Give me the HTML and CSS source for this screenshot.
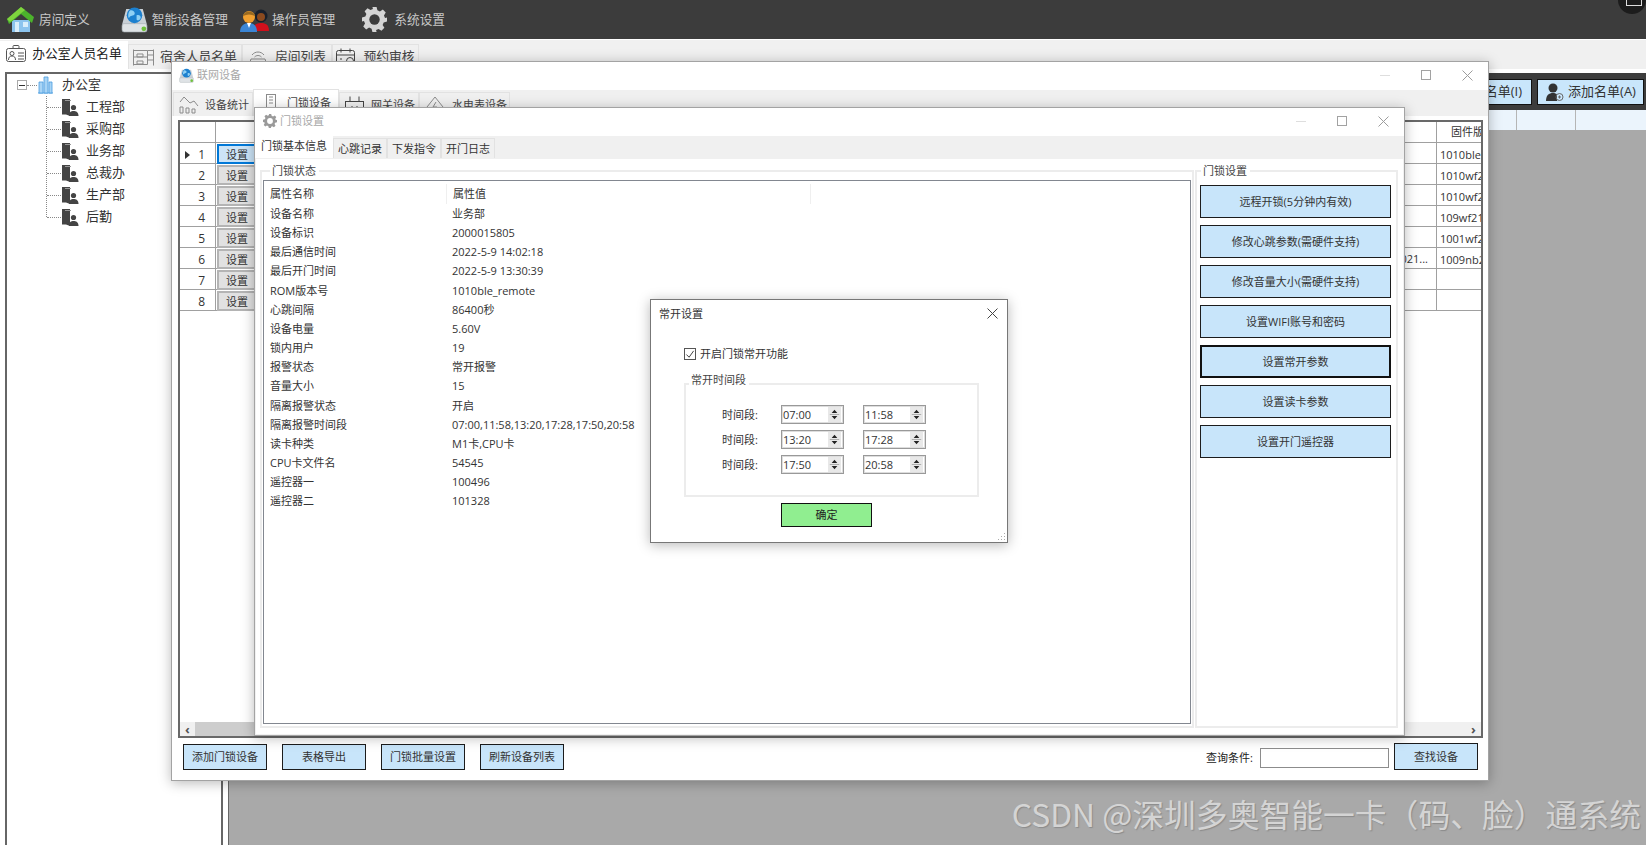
FILE: index.html
```html
<!DOCTYPE html>
<html lang="zh">
<head>
<meta charset="utf-8">
<title>联网设备</title>
<link rel="stylesheet" href="styles.css">
</head>
<body>
<svg class="defs" width="0" height="0">
  <symbol id="dept" viewBox="0 0 18 18">
    <path d="M1 1h8v17l-4-1.500H1z" fill="#444"/>
    <path d="M4 2h6v1H4z" fill="#999"/>
    <circle cx="12.500" cy="9.500" r="2.600" fill="#444"/>
    <path d="M8 18c0-4 2-5 4.500-5s5 1 5 5z" fill="#444"/>
  </symbol>
  <symbol id="disc" viewBox="0 0 26 26">
    <path d="M5 3h16l4 15H1z" fill="#c9d0d6"/>
    <rect x="1" y="17" width="24" height="8" rx="2" fill="#dfe3e6" stroke="#a5acb1" stroke-width=".6"/>
    <circle cx="13" cy="9" r="7.500" fill="#1c80cf"/>
    <path d="M9 4c3 0 5 2 4 4s-4 1-5 3-2-5 1-7zM15 9c2-1 4 0 4 2s-3 4-4 2z" fill="#8fd0f4"/>
    <circle cx="22" cy="22" r="2.300" fill="#6fc13e"/>
  </symbol>
  <symbol id="gear" viewBox="0 0 24 24">
    <path d="M10 0h4l.8 3.200 2.400 1 2.800-1.700 2.800 2.800-1.700 2.800 1 2.400L24 10v4l-3.200.8-1 2.400 1.700 2.800-2.800 2.800-2.800-1.700-2.400 1L14 24h-4l-.8-3.200-2.400-1-2.800 1.700-2.800-2.800 1.700-2.800-1-2.400L0 14v-4l3.200-.8 1-2.400-1.700-2.800 2.800-2.800 2.800 1.700 2.400-1z" fill="currentColor"/>
    <circle cx="12" cy="12" r="5" fill="var(--hole)"/>
  </symbol>
  <symbol id="win-x" viewBox="0 0 11 11"><path d="M.5.500l10 10M10.500.500l-10 10" stroke="currentColor" fill="none"/></symbol>
  <symbol id="arrows" viewBox="0 0 12 16"><path d="M6 3l3 3.500H3zM6 13l3-3.500H3z" fill="#222"/><path d="M1 8h10" stroke="#aaa"/></symbol>
</svg>

<header class="topbar">
  <div class="menu m-house">
    <svg class="ico" width="28" height="28" viewBox="0 0 28 28"><path d="M5 14h18v12H5z" fill="#8cc4ee"/><path d="M8 16h4v10H8zM16 16h5v5h-5z" fill="#d9eefb"/><path d="M0 13L14 1l13 10-2 6L14 8 2 18z" fill="#4cb32c"/><path d="M0 13L14 1l4 3L3 16z" fill="#7fd43e"/></svg>
    <span>房间定义</span>
  </div>
  <div class="menu m-disc">
    <svg class="ico" width="27" height="27"><use href="#disc"/></svg>
    <span>智能设备管理</span>
  </div>
  <div class="menu m-ops">
    <svg class="ico" width="30" height="24" viewBox="0 0 30 24"><circle cx="21" cy="8" r="6.500" fill="#18202c"/><circle cx="21" cy="9" r="4" fill="#8a4a1f"/><path d="M13 23c0-6 3-8 8-8s8 2 8 8z" fill="#d0101c"/><circle cx="9" cy="9" r="6" fill="#f0a030"/><path d="M3 8c1-6 11-6 12 0-4-2-8-2-12 0z" fill="#9a6a20"/><path d="M0 24c0-6 4-9 9-9s8 3 8 9z" fill="#3b86d6"/><path d="M7 15h4l-2 5z" fill="#fff"/></svg>
    <span>操作员管理</span>
  </div>
  <div class="menu m-gear">
    <svg class="ico gear-light" width="25" height="25"><use href="#gear"/></svg>
    <span>系统设置</span>
  </div>
  <div class="corner"></div>
</header>

<nav class="tabstrip">
  <div class="mtab is-active">
    <svg width="20" height="18" viewBox="0 0 20 18" class="line-ico"><rect x=".5" y="3.500" width="19" height="13" rx="2"/><rect x="7" y=".5" width="6" height="3" rx="1"/><circle cx="6" cy="8.500" r="2"/><path d="M2.500 15c0-3 1.500-4 3.500-4s3.500 1 3.500 4M12 8h6M12 11h6M12 14h6"/></svg>
    <span>办公室人员名单</span>
  </div>
  <div class="mtab">
    <svg width="21" height="17" viewBox="0 0 21 17" class="line-ico grey"><path d="M.5.500v16M20.500.500v16M.5 1.500h14v14H.5M14.500 1.500h6M14.500 6h6M14.500 11h6M.5 8h14M4 5h6v3H4zM4 12h6v3H4z"/></svg>
    <span>宿舍人员名单</span>
  </div>
  <div class="mtab">
    <svg width="20" height="17" viewBox="0 0 20 17" class="line-ico grey"><path d="M4 6c3-4 9-4 12 0M6.500 8c2-2 5-2 7 0M1 16l2-6h14l2 6z"/><path d="M4 13h1M7 13h1M10 13h1"/></svg>
    <span>房间列表</span>
  </div>
  <div class="mtab">
    <svg width="20" height="18" viewBox="0 0 20 18" class="line-ico dark"><rect x=".5" y="2.500" width="18" height="14" rx="2"/><path d="M5 .5v4M14 .5v4M.5 7h18M4 11h2M4 14h2"/><circle cx="14" cy="13" r="3.500" fill="#f0f0f0"/></svg>
    <span>预约审核</span>
  </div>
</nav>

<main class="workspace">
  <aside class="treewrap">
    <div class="tree">
      <div class="tree-root">
        <span class="minus"></span><span class="dots"></span>
        <svg width="17" height="18" viewBox="0 0 17 18" class="bld"><path d="M1 17h15" stroke="#4a9de0"/><path d="M2 6h4v11H2zM7 1h4v16H7zM12 6h3v11h-3z" fill="#a8d4f5" stroke="#4a9de0" stroke-width=".8"/></svg>
        <span class="tree-label">办公室</span>
      </div>
      <ul class="tree-kids">
        <li><svg width="18" height="18"><use href="#dept"/></svg><span>工程部</span></li>
        <li><svg width="18" height="18"><use href="#dept"/></svg><span>采购部</span></li>
        <li><svg width="18" height="18"><use href="#dept"/></svg><span>业务部</span></li>
        <li><svg width="18" height="18"><use href="#dept"/></svg><span>总裁办</span></li>
        <li><svg width="18" height="18"><use href="#dept"/></svg><span>生产部</span></li>
        <li><svg width="18" height="18"><use href="#dept"/></svg><span>后勤</span></li>
      </ul>
    </div>
  </aside>
  <section class="mdi">
    <div class="mdi-bar">
      <button class="dark-btn btn-imp">导入名单(I)</button>
      <button class="dark-btn btn-add">
        <svg width="20" height="20" viewBox="0 0 20 20"><circle cx="8" cy="6" r="4.500" fill="#333"/><path d="M1 19c0-6 3-8 7-8 2 0 3 .5 4 1.500V19z" fill="#333"/><circle cx="14.500" cy="15" r="3.500" fill="none" stroke="#666"/><path d="M13 15h3M14.500 13.500v3" stroke="#666"/></svg>
        <span>添加名单(A)</span>
      </button>
    </div>
    <div class="mdi-head"><i class="h1"></i><i class="h2"></i><i class="h3"></i></div>
  </section>
</main>

<!-- 联网设备 -->
<section class="win win-net">
  <div class="titlebar">
    <svg width="15" height="15" class="t-ico"><use href="#disc" width="15" height="15"/></svg>
    <span class="t-text">联网设备</span>
    <div class="winctl"><i class="w-min"></i><i class="w-max"></i><svg width="11" height="11"><use href="#win-x"/></svg></div>
  </div>
  <div class="net-tabs">
    <div class="ntab"><svg width="20" height="18" viewBox="0 0 20 18" class="line-ico grey"><path d="M1 11h3v6H1zM7 12h3v5H7zM13 13h3v4h-3zM1 6l4-5 6 6 4-2 4 5"/></svg><span>设备统计</span></div>
    <div class="ntab is-active"><svg width="18" height="18" viewBox="0 0 18 18" class="line-ico grey"><rect x="3.500" y=".5" width="9" height="16"/><path d="M6 3h4M6 6h4M6 9h4"/></svg><span>门锁设备</span></div>
    <div class="ntab"><svg width="20" height="18" viewBox="0 0 20 18" class="line-ico dark"><rect x=".5" y="5.500" width="18" height="11"/><path d="M5 .5v5M14 .5v5M6 11h2M11 11h2"/></svg><span>网关设备</span></div>
    <div class="ntab"><svg width="20" height="18" viewBox="0 0 20 18" class="line-ico grey"><path d="M10 1l8 10a8 7 0 0 1-16 0zM11 6l-3 5h4l-2 4"/></svg><span>水电表设备</span></div>
  </div>
  <div class="net-body">
    <div class="grid">
      <div class="g-rows">
        <div class="g-row g-head"><div class="g-rh"></div><div class="g-mid"></div><div class="g-fw fw-title">固件版</div></div>
        <div class="g-row"><div class="g-rh"><span class="cursor"></span>1</div><div class="g-mid"><span class="set set-on">设置</span></div><div class="g-fw">1010ble</div></div>
        <div class="g-row"><div class="g-rh">2</div><div class="g-mid"><span class="set">设置</span></div><div class="g-fw">1010wf2</div></div>
        <div class="g-row"><div class="g-rh">3</div><div class="g-mid"><span class="set">设置</span></div><div class="g-fw">1010wf2</div></div>
        <div class="g-row"><div class="g-rh">4</div><div class="g-mid"><span class="set">设置</span></div><div class="g-fw">109wf21</div></div>
        <div class="g-row"><div class="g-rh">5</div><div class="g-mid"><span class="set">设置</span></div><div class="g-fw">1001wf2</div></div>
        <div class="g-row"><div class="g-rh">6</div><div class="g-mid"><span class="set">设置</span><em class="g-trunc">2021...</em></div><div class="g-fw">1009nb2</div></div>
        <div class="g-row"><div class="g-rh">7</div><div class="g-mid"><span class="set">设置</span></div><div class="g-fw"></div></div>
        <div class="g-row"><div class="g-rh">8</div><div class="g-mid"><span class="set">设置</span></div><div class="g-fw"></div></div>
      </div>
      <div class="hscroll"><span class="arr">‹</span><div class="thumb"></div><span class="arr">›</span></div>
    </div>
  </div>
  <footer class="net-foot">
    <button class="blue-btn f-btn">添加门锁设备</button>
    <button class="blue-btn f-btn">表格导出</button>
    <button class="blue-btn f-btn">门锁批量设置</button>
    <button class="blue-btn f-btn">刷新设备列表</button>
    <span class="f-label">查询条件:</span>
    <span class="f-input"></span>
    <button class="blue-btn f-find">查找设备</button>
  </footer>
</section>

<!-- 门锁设置 -->
<section class="win win-lock">
  <div class="titlebar">
    <svg width="14" height="14" class="t-ico gear-grey"><use href="#gear" width="14" height="14"/></svg>
    <span class="t-text">门锁设置</span>
    <div class="winctl"><i class="w-min"></i><i class="w-max"></i><svg width="11" height="11"><use href="#win-x"/></svg></div>
  </div>
  <div class="lock-tabs">
    <div class="ltab is-active">门锁基本信息</div>
    <div class="ltab">心跳记录</div>
    <div class="ltab">下发指令</div>
    <div class="ltab">开门日志</div>
  </div>
  <div class="lock-panel">
    <div class="group g-status">
      <span class="legend">门锁状态</span>
      <div class="plist">
        <div class="p-head"><span>属性名称</span><span>属性值</span><span></span></div>
        <div class="p-row"><span>设备名称</span><span>业务部</span></div>
        <div class="p-row"><span>设备标识</span><span>2000015805</span></div>
        <div class="p-row"><span>最后通信时间</span><span>2022-5-9 14:02:18</span></div>
        <div class="p-row"><span>最后开门时间</span><span>2022-5-9 13:30:39</span></div>
        <div class="p-row"><span>ROM版本号</span><span>1010ble_remote</span></div>
        <div class="p-row"><span>心跳间隔</span><span>86400秒</span></div>
        <div class="p-row"><span>设备电量</span><span>5.60V</span></div>
        <div class="p-row"><span>锁内用户</span><span>19</span></div>
        <div class="p-row"><span>报警状态</span><span>常开报警</span></div>
        <div class="p-row"><span>音量大小</span><span>15</span></div>
        <div class="p-row"><span>隔离报警状态</span><span>开启</span></div>
        <div class="p-row"><span>隔离报警时间段</span><span>07:00,11:58,13:20,17:28,17:50,20:58</span></div>
        <div class="p-row"><span>读卡种类</span><span>M1卡,CPU卡</span></div>
        <div class="p-row"><span>CPU卡文件名</span><span>54545</span></div>
        <div class="p-row"><span>遥控器一</span><span>100496</span></div>
        <div class="p-row"><span>遥控器二</span><span>101328</span></div>
      </div>
    </div>
    <div class="group g-actions">
      <span class="legend">门锁设置</span>
      <button class="blue-btn a-btn">远程开锁(5分钟内有效)</button>
      <button class="blue-btn a-btn">修改心跳参数(需硬件支持)</button>
      <button class="blue-btn a-btn">修改音量大小(需硬件支持)</button>
      <button class="blue-btn a-btn">设置WIFI账号和密码</button>
      <button class="blue-btn a-btn a-focus">设置常开参数</button>
      <button class="blue-btn a-btn">设置读卡参数</button>
      <button class="blue-btn a-btn">设置开门遥控器</button>
    </div>
  </div>
</section>

<!-- 常开设置 -->
<section class="dialog">
  <div class="d-title"><span>常开设置</span><svg width="11" height="11"><use href="#win-x"/></svg></div>
  <label class="d-check">
    <span class="cb"><svg width="11" height="11" viewBox="0 0 11 11"><path d="M1.500 5.500l3 3 5-7" fill="none" stroke="#444" stroke-width="1.100"/></svg></span>
    <span>开启门锁常开功能</span>
  </label>
  <div class="d-group">
    <span class="legend d-legend">常开时间段</span>
    <div class="d-row"><span class="d-label">时间段:</span><span class="spin"><b>07:00</b><svg width="13" height="15"><use href="#arrows"/></svg></span><span class="spin"><b>11:58</b><svg width="13" height="15"><use href="#arrows"/></svg></span></div>
    <div class="d-row"><span class="d-label">时间段:</span><span class="spin"><b>13:20</b><svg width="13" height="15"><use href="#arrows"/></svg></span><span class="spin"><b>17:28</b><svg width="13" height="15"><use href="#arrows"/></svg></span></div>
    <div class="d-row"><span class="d-label">时间段:</span><span class="spin"><b>17:50</b><svg width="13" height="15"><use href="#arrows"/></svg></span><span class="spin"><b>20:58</b><svg width="13" height="15"><use href="#arrows"/></svg></span></div>
  </div>
  <button class="ok">确定</button>
  <svg class="grip" width="9" height="9" viewBox="0 0 9 9"><path d="M7 1h1v1H7zM4 4h1v1H4zM7 4h1v1H7zM1 7h1v1H1zM4 7h1v1H4zM7 7h1v1H7z" fill="#aaa"/></svg>
</section>

<div class="watermark">CSDN @深圳多奥智能一卡（码、脸）通系统</div>
</body>
</html>
```

FILE: styles.css
```css
* { box-sizing: border-box; }
html, body { margin: 0; height: 845px; overflow: hidden; }
body {
  width: 1646px;
  position: relative;
  background: #fff;
  color: #333;
  font: 11px/1.2 "Open Sans", "Noto Sans CJK SC", sans-serif;
  display: flex;
  flex-direction: column;
}
.defs { position: absolute; }
button { font: inherit; color: inherit; padding: 0; cursor: default; }
ul { list-style: none; margin: 0; padding: 0; }

/* top menu */
.topbar {
  height: 40px;
  flex: none;
  background: #3c3c3c;
  border-bottom: 1px solid #fff;
  display: flex;
  align-items: center;
  color: #c8c8c8;
  font-size: 12.700px;
  position: relative;
  overflow: hidden;
  --hole: #3c3c3c;
}
.menu { display: flex; align-items: center; gap: 4px; }
.m-house { margin-left: 7px; }
.m-disc { margin-left: 31px; }
.m-ops { margin-left: 12px; gap: 2px; }
.m-gear { margin-left: 27px; gap: 7px; }
.ico { flex: none; }
.gear-light { color: #d4d4d4; }
.corner {
  position: absolute;
  right: 0;
  top: -14px;
  width: 28px;
  height: 28px;
  border-radius: 50%;
  background: #1c1c1c;
}
.corner::after {
  content: "";
  position: absolute;
  left: 8px;
  top: 13px;
  width: 14px;
  height: 6px;
  border: 1px solid #ddd;
  border-top: 0;
}

/* tabs of the main window */
.tabstrip {
  height: 30px;
  flex: none;
  background: #f0f0f0;
  border-bottom: 1px solid #fff;
  display: flex;
  align-items: flex-end;
  font-size: 12.800px;
  white-space: nowrap;
}
.mtab {
  height: 25px;
  flex: none;
  display: flex;
  align-items: center;
  justify-content: center;
  gap: 7px;
  background: #f0f0f0;
  border: 1px solid #e2e2e2;
  border-bottom: 0;
  color: #444;
  width: 87px;
}
.mtab:nth-child(2) { width: 114px; gap: 6px; }
.mtab:nth-child(3) { width: 90px; }
.mtab.is-active { width: 128px; height: 28px; background: #fff; border: 0; color: #222; padding: 0 0 2px; gap: 6px; }
.line-ico { flex: none; fill: none; stroke: #555; stroke-width: 1; }
.line-ico.grey { stroke: #8b8b8b; }
.line-ico.dark { stroke: #444; }

/* workspace */
.workspace { flex: 1; display: flex; min-height: 0; background: #fff; }
.treewrap { width: 228px; flex: none; padding: 2px 5px 0 5px; }
.tree {
  height: 100%;
  background: #fff;
  border: 2px solid #666;
  border-width: 2px 2px 0 2px;
  padding: 0 0 0 10px;
  font-size: 13px;
  color: #333;
}
.tree-root { display: flex; align-items: center; height: 22px; }
.minus {
  width: 10px; height: 10px;
  border: 1px solid #a9a9a9;
  background: linear-gradient(#333, #333) center / 6px 1px no-repeat, #fff;
}
.dots { width: 10px; border-top: 1px dotted #888; }
.bld { flex: none; }
.tree-label { margin-left: 8px; }
.tree-kids { margin: 0 0 0 29px; border-left: 1px dotted #888; height: 121px; }
.tree-kids li { display: flex; align-items: center; height: 22px; padding-left: 14px; gap: 7px; position: relative; }
.tree-kids li::before { content: ""; position: absolute; left: 0; top: 11px; width: 14px; border-top: 1px dotted #888; }
.mdi { flex: 1; background: #a9a9a9; border-left: 1px solid #666; display: flex; flex-direction: column; margin-top: 3px; }
.mdi-bar {
  height: 37px;
  flex: none;
  background: #3c3c3c;
  display: flex;
  justify-content: flex-end;
  align-items: center;
  gap: 5px;
  padding: 1px 2px 0 0;
}
.dark-btn {
  height: 26px;
  width: 107px;
  background: #c9e6fb;
  border: 1px solid #111;
  font-size: 13px;
  color: #333;
  display: flex;
  align-items: center;
  justify-content: center;
  gap: 3px;
  white-space: nowrap;
}
.btn-imp { justify-content: flex-end; padding-right: 9px; }
.mdi-head { height: 20px; flex: none; background: #ebf4fc; display: flex; }
.mdi-head i { display: block; border-right: 1px solid #b5b5b5; }
.mdi-head .h1 { width: 1288px; }
.mdi-head .h2 { width: 59px; }
.mdi-head .h3 { flex: 1; border: 0; }

/* windows lie over the workspace, at their own desktop position */
.win, .dialog {
  position: absolute;
  background: #fff;
  display: flex;
  flex-direction: column;
  border: 1px solid #a3a3a3;
  box-shadow: 0 2px 12px rgba(0, 0, 0, .28);
}
.win-net { left: 171px; top: 61px; width: 1318px; height: 720px; }
.win-lock { left: 254px; top: 107px; width: 1151px; height: 629px; }
.titlebar { height: 28px; flex: none; display: flex; align-items: center; position: relative; padding: 0 0 2px 8px; gap: 3px; color: #a8a8a8; --hole: #fff; }
.win-net .titlebar { padding-left: 7px; }
.t-ico { flex: none; }
.gear-grey { color: #9a9a9a; }
.t-text { font-size: 11px; }
.winctl { margin-left: auto; display: flex; align-items: center; color: #9c9c9c; padding-right: 15px; }
.w-min { width: 10px; border-top: 1px solid #dedede; margin-right: 31px; }
.w-max { width: 10px; height: 10px; border: 1px solid #a2a2a2; margin-right: 31px; }
.net-tabs { height: 26px; flex: none; background: #f0f0f0; display: flex; align-items: flex-start; padding: 2px 0 0 1px; font-size: 11px; white-space: nowrap; }
.ntab { height: 24px; width: 80px; flex: none; display: flex; align-items: center; gap: 6px; padding: 0 0 0 5px; background: #f0f0f0; border: 1px solid #e2e2e2; border-bottom: 0; color: #444; }
.ntab:last-child { width: 91px; gap: 7px; }
.ntab.is-active { background: #fff; margin-top: -3px; height: 27px; padding-left: 9px; width: 86px; }
.net-body { flex: 1; padding: 4px 5px 0 6px; min-height: 0; background: #fff; display: flex; }
.grid { flex: 1; border: 2px solid #696969; display: flex; flex-direction: column; min-height: 0; overflow: hidden; }
.g-rows { flex: 1; }
.g-row { display: flex; height: 21px; border-bottom: 1px solid #a0a0a0; }
.g-rh { width: 36px; flex: none; border-right: 1px solid #a0a0a0; position: relative; text-align: right; padding-right: 10px; line-height: 24px; font-size: 12px; }
.cursor { position: absolute; left: 5px; top: 8px; border: 4px solid transparent; border-left: 5px solid #333; border-right: 0; }
.g-mid { flex: 1; display: flex; align-items: center; border-right: 1px solid #a0a0a0; padding-left: 1px; }
.g-fw { width: 44px; flex: none; overflow: hidden; white-space: nowrap; padding-left: 3px; line-height: 23px; font-size: 11px; }
.g-head .g-fw { line-height: 20px; }
.fw-title { padding-left: 14px; }
.set { width: 40px; height: 20px; margin-top: 1px; background: #e1e1e1; border: 2px solid #b4b4b4; text-align: center; line-height: 17px; }
.set-on { background: #cce4f7; border-color: #0078d7; }
.g-trunc { margin-left: auto; font-style: normal; padding-right: 8px; margin-top: 2px; }
.hscroll { height: 14px; flex: none; background: #f0f0f0; display: flex; align-items: center; font-size: 13px; font-weight: 700; color: #555; line-height: 13px; }
.arr { width: 15px; text-align: center; flex: none; }
.thumb { width: 400px; height: 100%; background: #cdcdcd; margin-right: auto; }
.net-foot { height: 42px; flex: none; display: flex; align-items: flex-start; padding: 0 10px 0 11px; background: #fff; }
.blue-btn { background: #c8e5fa; border: 1px solid #1c1c1c; color: #333; font-size: 11px; }
.f-btn { width: 84px; height: 26px; margin: 6px 15px 0 0; }
.f-label { margin: 13px 7px 0 auto; color: #222; }
.f-input { width: 129px; height: 20px; border: 1px solid #8c8c8c; margin: 10px 5px 0 0; }
.f-find { width: 84px; height: 27px; margin-top: 5px; }

/* lock settings */
.lock-tabs { height: 22px; flex: none; background: #f0f0f0; display: flex; align-items: flex-end; }
.ltab { height: 20px; width: 54px; background: #f0f0f0; border: 1px solid #e2e2e2; border-bottom: 0; line-height: 20px; text-align: center; color: #333; }
.ltab.is-active { width: 78px; height: 22px; background: #fff; border: 0; line-height: 20px; }
.lock-panel { flex: 1; display: flex; gap: 1px; padding: 11px 5px 6px 4px; background: #fff; border: 1px solid #f0f0f0; min-height: 0; }
.group { border: 2px solid #ececec; position: relative; }
.legend { position: absolute; top: -8px; left: 8px; background: #fff; padding: 0 3px 0 2px; line-height: 14px; color: #444; }
.g-status { flex: 1; padding: 8px 1px 2px; display: flex; }
.g-actions { width: 203px; flex: none; padding: 13px 5px 0 3px; display: flex; flex-direction: column; gap: 7px; }
.g-actions .legend { left: 4px; }
.plist { flex: 1; border: 1px solid #828790; padding: 3px 0 0 0; }
.p-head, .p-row { display: flex; align-items: center; white-space: nowrap; }
.p-head { height: 20px; }
.p-row { height: 19.170px; }
.p-head span, .p-row span { width: 183px; padding-left: 6px; flex: none; }
.p-head span { border-right: 1px solid #efefef; height: 20px; line-height: 20px; }
.p-head span:nth-child(2) { width: 364px; }
.p-head span:nth-child(3) { border: 0; }
.p-row span:nth-child(2) { width: auto; padding-left: 5px; }
.a-btn { height: 33px; flex: none; }
.a-focus { border: 2px solid #111; }

/* dialog */
.dialog { left: 650px; top: 299px; width: 358px; height: 244px; border-color: #777; color: #333; }
.d-title { height: 27px; flex: none; display: flex; align-items: center; justify-content: space-between; padding: 0 9px 0 8px; color: #333; }
.d-title svg { color: #444; }
.d-check { display: flex; align-items: center; gap: 4px; margin: 18px 0 0 33px; height: 18px; }
.cb { width: 12px; height: 12px; border: 1px solid #555; display: flex; align-items: center; justify-content: center; flex: none; background: #fff; }
.d-group { position: relative; margin: 20px 0 0 33px; width: 295px; height: 114px; border: 2px solid #ececec; padding-top: 20px; }
.d-legend { left: 3px; top: -12px; }
.d-row { display: flex; align-items: center; height: 19px; margin-bottom: 6px; padding-left: 36px; }
.d-label { width: 59px; flex: none; }
.spin { width: 63px; height: 19px; border: 1px solid #999; box-shadow: inset 0 0 0 1px #ddd; display: flex; align-items: center; justify-content: space-between; padding: 0 2px 0 1px; margin-right: 19px; }
.spin b { font-weight: 400; }
.spin svg { background: #e8e8e8; flex: none; }
.ok { margin: 6px 0 0 130px; width: 91px; height: 24px; background: #90ee90; border: 1px solid #111; color: #222; flex: none; }
.grip { position: absolute; right: 1px; bottom: 1px; }

.watermark {
  position: absolute;
  right: 5px;
  top: 793px;
  font-size: 31.800px;
  line-height: 40px;
  white-space: nowrap;
  color: #d4d4d4;
  font-family: "Noto Sans CJK SC", sans-serif;
  text-shadow: 1px 1px 1px rgba(110, 110, 110, .5);
}
```
